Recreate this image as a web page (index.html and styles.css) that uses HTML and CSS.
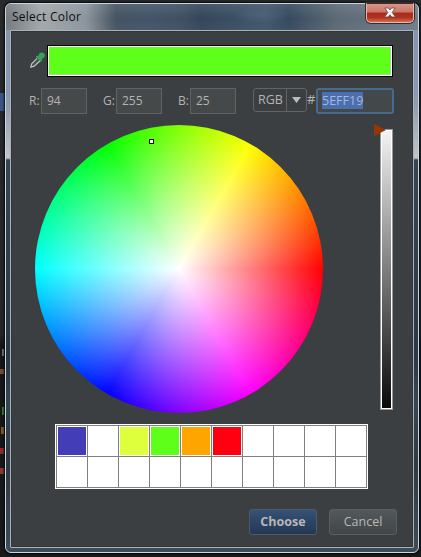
FILE: index.html
```html
<!DOCTYPE html>
<html lang="en">
<head>
<meta charset="utf-8">
<title>Select Color</title>
<link rel="stylesheet" href="styles.css">
</head>
<body>
<div class="window">
  <header class="titlebar">
    <span class="title">Select Color</span>
    <button class="close" aria-label="Close"><svg width="12" height="11" viewBox="0 0 12 11"><path d="M.8 1h3.700L6 3 7.500 1h3.700L8.200 5.400 11.400 10H7.700L6 7.800 4.300 10H.6L3.800 5.400z" fill="#f6f6f6" stroke="#67453f" stroke-width=".8"/></svg></button>
  </header>
  <main class="content">
    <div class="preview-row">
      <svg class="picker" width="17" height="18" viewBox="0 0 17 18">
        <path d="M8 6.300 2.700 11.800 1.800 15.200 5.200 14.200 11 8.800" fill="#44504d" stroke="#b5c9bd" stroke-width="1.200"/>
        <path d="M6.800 4.700 8 3.500 9.500 4.200C9.300 2 11 .3 13 .5S16.300 2.500 15.700 4.300 14 6.800 12.600 6.700L13.200 8.500 11.900 9.900z" fill="#37a25c"/>
      </svg>
      <div class="preview"></div>
    </div>
    <div class="fields">
      <label>R:</label><div class="field">94</div>
      <label class="g">G:</label><div class="field">255</div>
      <label class="b">B:</label><div class="field">25</div>
      <div class="combo"><span>RGB</span><i><svg width="9" height="6" viewBox="0 0 9 6"><path d="M0 0h9L4.500 6z" fill="#bcbcbc"/></svg></i></div>
      <label class="hash">#</label><div class="hex"><span>5EFF19</span></div>
    </div>
    <div class="picker-row">
      <div class="wheel"><div class="marker"></div></div>
      <div class="slider"><div class="shade"></div><svg class="pointer" width="12" height="12" viewBox="0 0 12 12"><path d="M0 0 12 6 0 12z" fill="#983600"/></svg></div>
    </div>
    <div class="swatches">
      <b class="indigo"></b><b></b><b class="lime"></b><b class="green"></b><b class="orange"></b><b class="red"></b><b></b><b></b><b></b><b></b>
      <b></b><b></b><b></b><b></b><b></b><b></b><b></b><b></b><b></b><b></b>
    </div>
    <div class="actions"><button class="choose">Choose</button><button>Cancel</button></div>
  </main>
</div>
</body>
</html>
```

FILE: styles.css
```css
* { box-sizing: border-box; }
body {
  margin: 0;
  width: 421px;
  height: 557px;
  padding: 3px 2px 4px 5px;
  overflow: hidden;
  font: 13px "Open Sans", "Noto Sans", sans-serif;
  color: #b4b4b4;
  background:
    linear-gradient(#3b5488, #3b5488) 0 93px / 5px 18px no-repeat,
    linear-gradient(#66737b, #66737b) 2px 349px / 2px 7px no-repeat,
    linear-gradient(#7d4934, #7d4934) 0 369px / 4px 5px no-repeat,
    linear-gradient(#357c2c, #357c2c) 2px 407px / 2px 8px no-repeat,
    linear-gradient(#805c22, #805c22) 1px 427px / 3px 7px no-repeat,
    linear-gradient(#912829, #912829) 0 448px / 4px 6px no-repeat,
    linear-gradient(#87382f, #87382f) 0 468px / 4px 6px no-repeat,
    linear-gradient(#27292a 0, #242627 335px, #151719 345px, #17191a 100%);
}
.window {
  width: 414px;
  height: 550px;
  border: 1px solid #cbd5dc;
  border-radius: 6px;
  padding: 0 4px 4px;
  box-shadow: 0 0 2px 1px #05090c;
  background:
    linear-gradient(#8493a8 0, #8799b3 90px, #92a0ae 104px, #c1c4c7 154px, #354552 156px, #2b3846 350px, #354653 400px, #303943 460px, #3d4c58 100%);
}
.titlebar {
  display: flex;
  justify-content: space-between;
  height: 26px;
  margin: 0 -4px;
  border-radius: 5px 5px 0 0;
  background:
    radial-gradient(ellipse at 50% 50%, #566a7e99, transparent 70%) 225px 3px / 60px 17px no-repeat,
    linear-gradient(#ffffff18, transparent 55%, #ffffff08),
    linear-gradient(90deg, #747a80, #a2a7ab 35px, #8b949d 80px, #455361 110px, #435569 140px, #405063 175px, #34475a 195px, #40556c 260px, #354a5e 283px, #5c6975 330px, #707d8b);
}
.title {
  padding: 4px 0 0 6px;
  color: #0c0f12;
  font-size: 12px;
  letter-spacing: .25px;
  line-height: 18px;
}
button { padding: 0; font: inherit; }
.close {
  display: flex;
  justify-content: center;
  align-items: center;
  width: 48px;
  height: 20px;
  margin: -1px 4px 0 0;
  border: 1px solid #e0bab2;
  border-top-color: #43272a;
  border-radius: 0 0 5px 5px;
  background: linear-gradient(#d9958a, #c97665 45%, #a9291a 50%, #b03322 75%, #d66c4d);
  box-shadow: 0 0 0 1px #352c30;
}
.close svg { margin-top: -1px; }
.content {
  height: 518px;
  border: 1px solid #a9b3bb;
  border-radius: 1px;
  padding: 14px 18px 0;
  background: #3c3f41;
  box-shadow: inset 0 0 0 1px #313538;
}
.preview-row { display: flex; }
.picker { margin: 7px 0 0; }
.preview {
  flex: none;
  width: 346px;
  height: 32px;
  margin-left: 1px;
  border: 1px solid #000;
  background: #5eff19;
  box-shadow: inset 0 0 0 1px #fff, inset -1px -1px 0 1px #abcf9d;
}
.fields {
  display: flex;
  height: 26px;
  margin-top: 11px;
  line-height: 25px;
}
.fields label { width: 12px; font-size: 12px; white-space: nowrap; }
.fields .g { margin-left: 16px; width: 13px; }
.fields .b { margin-left: 16px; width: 12px; }
.field {
  width: 46px;
  height: 26px;
  border: 1px solid #606364;
  padding-left: 5px;
  background: #45494a;
  font-size: 12px;
  line-height: 24px;
}
.combo {
  display: flex;
  width: 54px;
  height: 24px;
  margin-left: 17px;
  border: 1px solid #606466;
  border-radius: 3px;
  line-height: 22px;
}
.combo span { width: 33px; padding-left: 4px; font-size: 12.5px; }
.combo i { display: grid; place-items: center; width: 20px; border-left: 1px solid #606466; }
.fields .hash { width: 9px; text-align: left; font-size: 13px; line-height: 23px; }
.hex {
  width: 78px;
  height: 26px;
  border: 2px solid #466b8c;
  border-radius: 3px;
  padding: 2px 0 0 4px;
  background: #43484a;
  line-height: 17px;
  color: #a5b9dc;
}
.hex span { display: block; width: 41px; height: 17px; background: #4b6eaf; font-size: 12.5px; }
.picker-row { display: flex; margin: 11px 0 0 6px; height: 299px; }
.wheel {
  position: relative;
  flex: none;
  width: 288px;
  height: 288px;
  border-radius: 50%;
  background:
    radial-gradient(circle closest-side, #fff, #fff0),
    conic-gradient(from 90deg, #f00, #f0f, #00f, #0ff, #0f0, #ff0, #f00);
}
.marker {
  position: absolute;
  left: 114px;
  top: 14px;
  width: 5px;
  height: 5px;
  border: 1px solid #000;
  background: #fff;
}
.slider { position: relative; width: 13px; height: 281px; margin: 4px 0 0 57px; }
.shade {
  height: 281px;
  border: 1px solid #999;
  background: linear-gradient(#f4f4f4, #080808);
  box-shadow: inset 0 0 0 1px #fff;
}
.pointer { position: absolute; left: -6px; top: -5px; }
.swatches {
  display: grid;
  grid-template-columns: repeat(10, 30px);
  grid-template-rows: repeat(2, 30px);
  gap: 1px;
  width: 313px;
  height: 65px;
  margin-left: 26px;
  border: 1px solid #fff;
  padding: 1px;
  background: #808080;
}
.swatches b { border: 1px solid #fff; background: #fff; }
.swatches .indigo { background: #433db8; }
.swatches .lime { background: #deff3b; }
.swatches .green { background: #5eff19; }
.swatches .orange { background: #ffa500; }
.swatches .red { background: #ff0010; }
.actions { display: flex; justify-content: flex-end; gap: 12px; margin: 20px -2px 0 0; }
.actions button {
  flex: none;
  width: 68px;
  height: 26px;
  border: 1px solid #5b5e60;
  border-radius: 3px;
  color: #b8b8b8;
  font-size: 12.5px;
  line-height: 24px;
  background: linear-gradient(#53585a, #414648);
}
.actions .choose { font-weight: bold; background: linear-gradient(#365276, #233752); border-color: #4b5a69; }
```
